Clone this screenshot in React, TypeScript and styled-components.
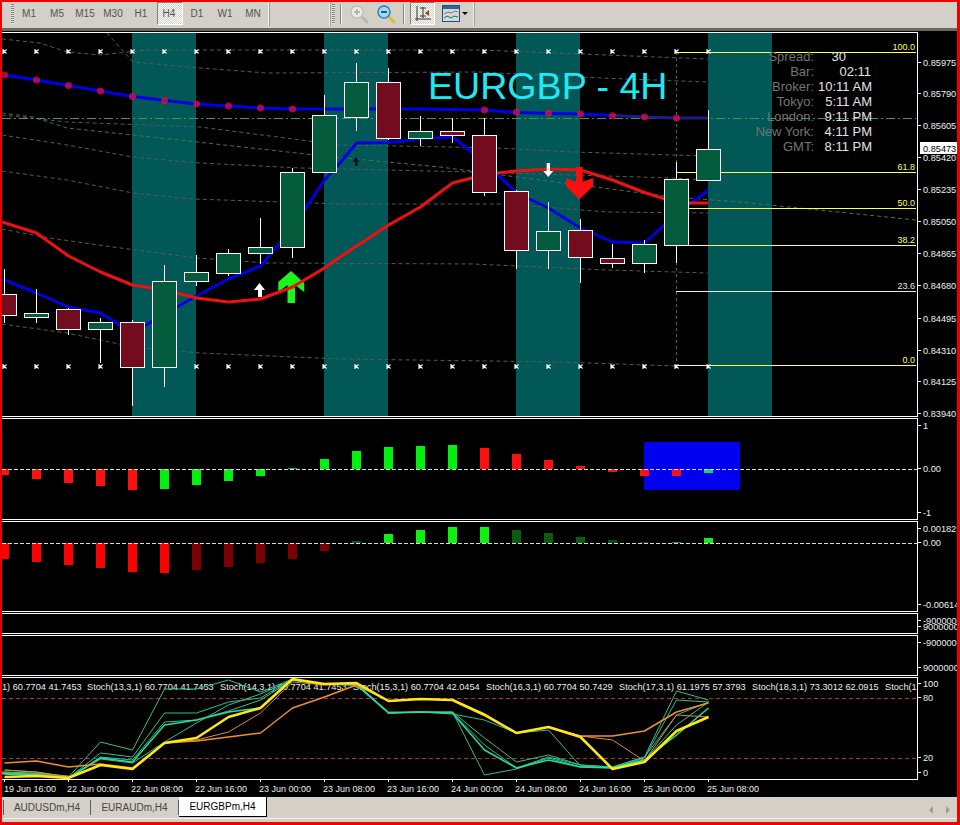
import * as React from "react";
import styled, { createGlobalStyle } from "styled-components";

const cx = (i: number) => 4.5 + 32 * i;
const pts = (p: number[][]) => p.map((q) => q.join(",")).join(" ");
const series = (ys: number[]) => ys.map((y, i) => `${cx(i)},${y}`).join(" ");

const TIMEFRAMES = ["M1", "M5", "M15", "M30", "H1", "H4", "D1", "W1", "MN"];

// [wick top, wick bottom, body top, body bottom, up?]
const CANDLES: [number, number, number, number, boolean][] = [
  [269, 323, 294, 315, false],
  [289, 323, 313, 317, true],
  [308, 335, 309, 329, false],
  [318, 363, 322, 329, true],
  [320, 406, 322, 367, false],
  [265, 387, 281, 367, true],
  [255, 286, 272, 281, true],
  [249, 276, 253, 273, true],
  [218, 264, 247, 253, true],
  [168, 258, 172, 247, true],
  [95, 172, 115, 172, true],
  [63, 131, 82, 117, true],
  [68, 140, 82, 138, false],
  [116, 146, 131, 138, true],
  [118, 143, 131, 135, false],
  [118, 196, 135, 192, false],
  [190, 269, 191, 250, false],
  [202, 269, 231, 250, true],
  [219, 283, 230, 257, false],
  [244, 268, 258, 263, false],
  [240, 273, 244, 263, true],
  [162, 263, 179, 245, true],
  [110, 150, 149, 180, true],
];

const DASHED: { color: string; p: number[][] }[] = [
  { color: "#555b55", p: [[2, 39], [40, 43], [67, 52], [100, 55], [147, 50], [300, 50], [480, 50], [708, 59]] },
  { color: "#555b55", p: [[107, 33], [133, 62], [200, 68], [267, 73], [480, 72], [600, 78], [708, 82]] },
  { color: "#4f6f4f", p: [[2, 113], [33, 117], [67, 128], [133, 135], [197, 142], [333, 157], [440, 167], [540, 180], [673, 197], [740, 202], [916, 220]] },
  { color: "#555b55", p: [[2, 135], [67, 145], [133, 157], [200, 163], [300, 168], [473, 172], [673, 178], [708, 180]] },
  { color: "#555b55", p: [[2, 115], [67, 122], [200, 127], [340, 145], [400, 146], [497, 148], [573, 152], [708, 156]] },
  { color: "#555b55", p: [[2, 171], [67, 180], [133, 193], [193, 199], [340, 204], [507, 204], [607, 212], [708, 213]] },
  { color: "#555b55", p: [[2, 229], [43, 237], [113, 247], [197, 258], [267, 263], [473, 264], [607, 270], [708, 273]] },
  { color: "#555b55", p: [[2, 324], [67, 333], [133, 347], [200, 353], [340, 359], [560, 362], [676, 366]] },
];

const FIBS = [
  { y: 52, label: "100.0", color: "#ffff55" },
  { y: 172, label: "61.8", color: "#ffff55" },
  { y: 208, label: "50.0", color: "#ffff55" },
  { y: 245, label: "38.2", color: "#ffff55" },
  { y: 291, label: "23.6", color: "#e8e8e8" },
  { y: 365, label: "0.0", color: "#ffff55" },
];

const UPPER_DOTS = [75, 80, 85.5, 91, 96.5, 100.5, 104, 106, 108, 109];
const LATE_DOTS = [110, 112, 113, 114, 115.7, 117, 118];

const MACD: [number, string][] = [
  [475, "#ff1010"], [479, "#ff1010"], [483, "#ff1010"], [486, "#ff1010"], [490, "#ff1010"],
  [489, "#00f010"], [485, "#00f010"], [481, "#00f010"], [476, "#00f010"], [468, "#00c020"],
  [459, "#00f010"], [451, "#00f010"], [447, "#00f010"], [446, "#00f010"], [445, "#00f010"],
  [448, "#ff1010"], [454, "#ff1010"], [460, "#ff1010"], [466, "#ff1010"], [472, "#f01020"],
  [476, "#ff1010"], [476, "#ff1010"], [473, "#10e060"],
];

const OSMA: [number, string][] = [
  [559, "#ff0000"], [562, "#ff0000"], [565, "#ff0000"], [568, "#ff0000"], [572, "#ff0000"], [573, "#ff0000"],
  [570, "#7d0000"], [567, "#7d0000"], [563, "#7d0000"], [559, "#7d0000"], [551, "#7d0000"],
  [541, "#0c5a1c"], [534, "#10f010"], [530, "#10f010"], [527, "#10f010"], [527, "#10f010"],
  [530, "#0c5c0c"], [533, "#0c5c0c"], [537, "#0c5c0c"], [540, "#0c4c0c"], [542, "#0c4c0c"],
  [542, "#10a030"], [538, "#10f010"],
];

const STOCH_LABELS = [
  { x: 2, text: "1) 60.7704 41.7453" },
  { x: 87, text: "Stoch(13,3,1) 60.7704 41.7453" },
  { x: 220, text: "Stoch(14,3,1) 60.7704 41.7453" },
  { x: 353, text: "Stoch(15,3,1) 60.7704 42.0454" },
  { x: 486, text: "Stoch(16,3,1) 60.7704 50.7429" },
  { x: 619, text: "Stoch(17,3,1) 61.1975 57.3793" },
  { x: 752, text: "Stoch(18,3,1) 73.3012 62.0915" },
  { x: 885, text: "Stoch(19,3,1) 73.3012 62.0915" },
];

const STOCH_LINES: { color: string; w: number; ys: number[] }[] = [
  { color: "#2fc090", w: 1, ys: [770, 772, 777, 742, 750, 689, 689, 680, 692, 679, 684, 683, 713, 712, 712, 775, 769, 758, 767, 767, 757, 691, 700] },
  { color: "#2fc090", w: 1, ys: [772, 774, 778, 753, 757, 713, 713, 702, 698, 679, 684, 684, 712, 712, 712, 738, 762, 755, 765, 767, 757, 715, 702] },
  { color: "#2fc090", w: 1, ys: [773, 775, 778, 759, 763, 742, 723, 705, 694, 680, 684, 685, 713, 712, 714, 720, 733, 730, 766, 768, 758, 700, 702] },
  { color: "#2fc090", w: 1, ys: [773, 775, 778, 757, 760, 722, 720, 711, 700, 680, 684, 685, 713, 712, 713, 745, 768, 757, 765, 767, 760, 725, 702] },
  { color: "#22e0a0", w: 1.5, ys: [774, 775, 778, 758, 762, 725, 720, 712, 708, 680, 684, 685, 713, 712, 713, 750, 768, 760, 767, 768, 760, 735, 708] },
  { color: "#d98a3a", w: 1, ys: [770, 772, 777, 765, 769, 743, 740, 732, 713, 682, 685, 684, 701, 699, 700, 714, 733, 727, 736, 740, 761, 715, 717] },
  { color: "#f0902a", w: 1.5, ys: [763, 761, 767, 764, 768, 743, 741, 737, 733, 708, 697, 685, 701, 699, 700, 714, 733, 727, 736, 736, 731, 712, 703] },
  { color: "#ffe812", w: 2.5, ys: [777, 776, 778, 765, 769, 743, 738, 717, 708, 679, 684, 683, 701, 699, 700, 715, 733, 727, 737, 769, 762, 731, 717] },
];

const TIME_LABELS = [
  "19 Jun 16:00", "22 Jun 00:00", "22 Jun 08:00", "22 Jun 16:00", "23 Jun 00:00", "23 Jun 08:00",
  "23 Jun 16:00", "24 Jun 00:00", "24 Jun 08:00", "24 Jun 16:00", "25 Jun 00:00", "25 Jun 08:00",
];

const INFO: { label: string; value: string; pad?: number }[] = [
  { label: "Spread:", value: "30", pad: 26 },
  { label: "Bar:", value: "02:11", pad: 1 },
  { label: "Broker:", value: "10:11 AM" },
  { label: "Tokyo:", value: "5:11 AM" },
  { label: "London:", value: "9:11 PM" },
  { label: "New York:", value: "4:11 PM" },
  { label: "GMT:", value: "8:11 PM" },
];

const ScaleAxis: React.FC<{
  top: number;
  height: number;
  labels: { y: number; text: string }[];
  current?: { y: number; text: string };
}> = ({ top, height, labels, current }) => (
  <ScaleSvg width={39} height={height} viewBox={`918 ${top} 39 ${height}`}>
    {labels.map((l) => (
      <g key={`${l.text}-${l.y}`}>
        <line x1={918} x2={921} y1={l.y + 0.5} y2={l.y + 0.5} stroke="#fff" />
        <ScaleText x={923} y={l.y + 4}>
          {l.text}
        </ScaleText>
      </g>
    ))}
    {current && (
      <>
        <rect x={920} y={current.y - 6} width={37} height={12} fill="#fff" />
        <CurrentPrice x={923} y={current.y + 4}>
          {current.text}
        </CurrentPrice>
      </>
    )}
  </ScaleSvg>
);

const Histogram: React.FC<{ zero: number; bars: [number, string][] }> = ({ zero, bars }) => (
  <>
    {bars.map(([end, color], i) => (
      <rect
        key={i}
        x={cx(i) - 4.5}
        y={Math.min(end, zero)}
        width={9}
        height={Math.abs(end - zero)}
        fill={color}
      />
    ))}
    <line x1={2} x2={917} y1={zero + 0.5} y2={zero + 0.5} stroke="#ddd" strokeDasharray="4 2" />
  </>
);

const MainPlot = () => (
  <PlotSvg width={915} height={383} viewBox="2 33 915 383">
    {[132, 324, 516, 708].map((x) => (
      <rect key={x} x={x} y={33} width={64} height={383} fill="#025757" />
    ))}
    {DASHED.map((d, i) => (
      <polyline key={i} points={pts(d.p)} fill="none" stroke={d.color} strokeDasharray="4 3" />
    ))}
    <line x1={2} x2={916} y1={118.5} y2={118.5} stroke="#3f9a4a" strokeDasharray="9 3 2 3" />
    <line x1={676.5} x2={676.5} y1={52} y2={365} stroke="#2f7a2f" strokeDasharray="3 3" />
    {FIBS.map((f) => (
      <g key={f.label}>
        <line x1={676} x2={916} y1={f.y + 0.5} y2={f.y + 0.5} stroke={f.color} />
        <FibText x={915} y={f.y - 2} fill={f.color}>
          {f.label}
        </FibText>
      </g>
    ))}

    <polyline
      fill="none"
      stroke="#0000e6"
      strokeWidth={3}
      points={series([75, 80, 85.5, 91, 96.5, 100.5, 104, 106, 108, 109, 109, 109, 109, 109, 109.5, 110, 112.5, 113.5, 114, 115.5])}
    />
    <polyline fill="none" stroke="#1c1c8c" strokeWidth={3} points="612.5,115.5 644.5,117 676.5,118 708.5,118" />
    {UPPER_DOTS.map((y, i) => (
      <Dot key={i} cx={cx(i)} cy={y} r={3.5} />
    ))}
    {LATE_DOTS.map((y, i) => (
      <Dot key={i} cx={cx(i + 15)} cy={y} r={3.5} />
    ))}

    <polygon
      fill="#1cf51c"
      points="291,271 304.3,283 304.3,292 295,285 295,303 287.5,303 287.5,285 278.3,292 278.3,282"
    />
    <polyline
      fill="none"
      stroke="#0000e6"
      strokeWidth={3}
      strokeLinejoin="round"
      points="2,279 36.5,293 68.5,307 100.5,313 132.5,333 164.5,314 196.5,296 228.5,279 260.5,266 292.5,228 324.5,180 340,163 356.5,143 388.5,142.5 420.5,139 452.5,136.7 484.5,162 516.5,193 548.5,208 580.5,228 612.5,242 644.5,243 676.5,214 708.5,190"
    />
    <polyline
      fill="none"
      stroke="#f01010"
      strokeWidth={3}
      strokeLinejoin="round"
      points="2,222 36.5,233 68.5,256 100.5,272 132.5,285 164.5,290 196.5,298 228.5,302 260.5,299 292.5,287 324.5,268 340,257 388.5,225 420.5,207 452.5,183 472,178 497,173 516.5,171 548.5,169 580.5,170 612.5,180 643,192 665,199 690,203 708,203"
    />

    {CANDLES.map(([hi, lo, top, bottom, up], i) => (
      <g key={i} shapeRendering="crispEdges">
        <line x1={cx(i)} x2={cx(i)} y1={hi} y2={lo} stroke="#fff" />
        <rect
          x={cx(i) - 12}
          y={top + 0.5}
          width={24}
          height={bottom - top}
          fill={up ? "#045c3c" : "#740c20"}
          stroke="#fff"
        />
      </g>
    ))}

    {CANDLES.map((_, i) => (
      <g key={i}>
        <Star d={`M${cx(i) - 2} 49.5l4 4M${cx(i) + 2} 49.5l-4 4M${cx(i) - 1.5} 49v5`} />
        {i !== 4 && i !== 5 && (
          <Star d={`M${cx(i) - 2} 364.5l4 4M${cx(i) + 2} 364.5l-4 4M${cx(i) - 1.5} 364v5`} />
        )}
      </g>
    ))}

    <polygon fill="#fff" points="259.5,283 265,290 262,290 262,297 258,297 258,290 254,290" />
    <polygon fill="#111" points="356,157 360,162 357.5,161 357.5,166 355,166 355,161 352,162" />
    <polygon fill="#fff" points="546.7,163 550,163 550,171 553.3,171 548.3,177 543.3,171 546.7,171" />
    <polygon
      fill="#f81010"
      points="576,167 582.7,167 582.7,181.7 593.3,178 593.3,186 579.3,199.5 566,186 566,178 576,181.7"
    />
  </PlotSvg>
);

const StochPlot = () => (
  <PlotSvg width={915} height={101} viewBox="2 678 915 101">
    {STOCH_LABELS.map((l) => (
      <StochText key={l.x} x={l.x} y={690}>
        {l.text}
      </StochText>
    ))}
    {[698.5, 758.5].map((y) => (
      <line key={y} x1={2} x2={917} y1={y} y2={y} stroke="#b03040" strokeDasharray="4 3" />
    ))}
    <polyline fill="none" stroke="#8aa83c" strokeWidth={3} points="2,773 36.5,774 68.5,777" />
    {STOCH_LINES.map((l, i) => (
      <polyline key={i} fill="none" stroke={l.color} strokeWidth={l.w} strokeLinejoin="round" points={series(l.ys)} />
    ))}
  </PlotSvg>
);

const ZoomIcon: React.FC<{ active?: boolean; minus?: boolean }> = ({ active, minus }) => (
  <svg width={20} height={20} viewBox="0 0 20 20">
    <line
      x1={12}
      y1={12}
      x2={18}
      y2={18}
      stroke={active ? "#e0c030" : "#b8b8b0"}
      strokeWidth={3}
      strokeLinecap="round"
    />
    <circle cx={8} cy={8} r={6} fill={active ? "#a8d8f0" : "#ecebe6"} stroke={active ? "#2c80c0" : "#c0c0bc"} strokeWidth={1.5} />
    <path d={minus ? "M5 8h6" : "M5 8h6M8 5v6"} stroke={active ? "#205c90" : "#b4b4b0"} strokeWidth={2} />
  </svg>
);

const CrosshairIcon = () => (
  <svg width={18} height={18} viewBox="0 0 18 18">
    <path d="M3 1v15M1 14h16M9 2v11M6 3h6M6 11h6" stroke="#303830" fill="none" />
    <path d="M11 8l4-3v6z" fill="#a04020" />
  </svg>
);

const TemplateIcon = () => (
  <svg width={18} height={17} viewBox="0 0 18 17">
    <rect x={0.5} y={0.5} width={17} height={16} fill="#c8dcec" stroke="#2c4c78" />
    <rect x={1} y={1} width={16} height={3} fill="#34609c" />
    <path d="M2 9l4-2 3 1 4-2 3 1" stroke="#c06020" fill="none" />
    <path d="M2 13l3-2 4 2 3-2 4 1" stroke="#306830" fill="none" />
  </svg>
);

export default function App() {
  return (
    <>
      <GlobalStyle />
      <Frame>
        <Toolbar>
          <Grip />
          <Timeframes>
            {TIMEFRAMES.map((t) => (
              <TimeframeButton key={t} $pressed={t === "H4"}>
                {t}
              </TimeframeButton>
            ))}
          </Timeframes>
          <BarEdge />
          <BarGap />
          <BarEdge />
          <Grip $near />
          <Divider $gap={5} />
          <IconButton $left={5}>
            <ZoomIcon />
          </IconButton>
          <IconButton $left={4}>
            <ZoomIcon active minus />
          </IconButton>
          <Divider $gap={6} />
          <PressedIcon>
            <CrosshairIcon />
          </PressedIcon>
          <TemplateSlot>
            <TemplateIcon />
          </TemplateSlot>
          <DropArrow />
          <BarEdge $left={5} />
        </Toolbar>

        <Chart>
          <PanelRow>
            <Plot $height={385}>
              <MainPlot />
              <Title>EURGBP - 4H</Title>
              <InfoTable>
                {INFO.map((r) => (
                  <React.Fragment key={r.label}>
                    <InfoLabel>{r.label}</InfoLabel>
                    <InfoValue $pad={r.pad ?? 0}>{r.value}</InfoValue>
                  </React.Fragment>
                ))}
              </InfoTable>
            </Plot>
            <ScaleAxis
              top={32}
              height={385}
              current={{ y: 148, text: "0.85473" }}
              labels={[
                { y: 62, text: "0.85975" },
                { y: 93, text: "0.85790" },
                { y: 125, text: "0.85605" },
                { y: 157, text: "0.85420" },
                { y: 189, text: "0.85235" },
                { y: 221, text: "0.85050" },
                { y: 253, text: "0.84865" },
                { y: 285, text: "0.84680" },
                { y: 318, text: "0.84495" },
                { y: 350, text: "0.84310" },
                { y: 381, text: "0.84125" },
                { y: 413, text: "0.83940" },
              ]}
            />
          </PanelRow>

          <PanelRow>
            <Plot $height={102}>
              <PlotSvg width={915} height={100} viewBox="2 419 915 100">
                <rect x={644} y={442} width={96} height={48} fill="#0000f0" />
                <Histogram zero={469} bars={MACD} />
              </PlotSvg>
            </Plot>
            <ScaleAxis
              top={418}
              height={102}
              labels={[
                { y: 425, text: "1" },
                { y: 468, text: "0.00" },
                { y: 512, text: "-1" },
              ]}
            />
          </PanelRow>

          <PanelRow>
            <Plot $height={91}>
              <PlotSvg width={915} height={89} viewBox="2 522 915 89">
                <Histogram zero={543} bars={OSMA} />
              </PlotSvg>
            </Plot>
            <ScaleAxis
              top={521}
              height={91}
              labels={[
                { y: 528, text: "0.001825" },
                { y: 542, text: "0.00" },
                { y: 604, text: "-0.00614" },
              ]}
            />
          </PanelRow>

          <PanelRow>
            <Plot $height={21} />
            <ScaleAxis
              top={613}
              height={21}
              labels={[
                { y: 620, text: "-9000000" },
                { y: 626, text: "9000000" },
              ]}
            />
          </PanelRow>

          <PanelRow>
            <Plot $height={41} />
            <ScaleAxis
              top={635}
              height={41}
              labels={[
                { y: 642, text: "-9000000" },
                { y: 667, text: "9000000" },
              ]}
            />
          </PanelRow>

          <PanelRow>
            <Plot $height={103}>
              <StochPlot />
            </Plot>
            <ScaleAxis
              top={677}
              height={103}
              labels={[
                { y: 683, text: "100" },
                { y: 697, text: "80" },
                { y: 757, text: "20" },
                { y: 772, text: "0" },
              ]}
            />
          </PanelRow>
        </Chart>

        <TimeAxis width={955} height={17} viewBox="2 780 955 17">
          {TIME_LABELS.map((t, i) => (
            <g key={t}>
              <line x1={cx(i * 2)} x2={cx(i * 2)} y1={780} y2={782} stroke="#fff" />
              <TimeText x={i === 0 ? 4 : cx(i * 2) - 1.5} y={792}>
                {t}
              </TimeText>
            </g>
          ))}
        </TimeAxis>

        <TabBar>
          <TabItem $first>AUDUSDm,H4</TabItem>
          <TabItem>EURAUDm,H4</TabItem>
          <ActiveTab>EURGBPm,H4</ActiveTab>
          <Arrows>
            <ScrollArrow $dir="left" />
            <ScrollArrow $dir="right" />
          </Arrows>
        </TabBar>
      </Frame>
    </>
  );
}

const GlobalStyle = createGlobalStyle`
  html, body {
    margin: 0;
    background: #000;
    font-family: "Liberation Sans", Arial, sans-serif;
  }
`;

const Frame = styled.div`
  box-sizing: border-box;
  width: 960px;
  height: 825px;
  display: flex;
  flex-direction: column;
  border: solid #f00000;
  border-width: 2px 3px 3px 2px;
  background: #000;
  overflow: hidden;
`;

const Toolbar = styled.div`
  box-sizing: border-box;
  height: 29px;
  flex: none;
  display: flex;
  align-items: center;
  padding-bottom: 3px;
  background: #d4d0c8;
  border-bottom: 3px solid #6a6862;
`;

const Grip = styled.div<{ $near?: boolean }>`
  width: 3px;
  height: 20px;
  margin-left: ${(p) => (p.$near ? "1px" : "9px")};
  background: repeating-linear-gradient(to bottom, #807c74 0 1px, #eeeae2 1px 2px);
`;

const Timeframes = styled.div`
  display: flex;
  margin-left: 1px;
`;

const TimeframeButton = styled.div<{ $pressed?: boolean }>`
  box-sizing: border-box;
  width: 28px;
  height: 23px;
  display: flex;
  align-items: center;
  justify-content: center;
  font-size: 10px;
  color: #55534e;
  ${(p) =>
    p.$pressed &&
    `
    margin-left: 2px;
    width: 26px;
    padding-right: 2px;
    background: repeating-conic-gradient(#fff 0 25%, #d4d0c8 0 50%) 0 0 / 2px 2px;
    border: 1px solid;
    border-color: #85827a #fff #fff #85827a;
  `}
`;

const BarEdge = styled.div<{ $left?: number }>`
  width: 1px;
  height: 24px;
  margin-left: ${(p) => p.$left ?? 1}px;
  background: #f4f2ec;
  border-right: 1px solid #a09c94;
`;

const BarGap = styled.div`
  width: 58px;
`;

const Divider = styled.div<{ $gap: number }>`
  width: 1px;
  height: 20px;
  margin-left: ${(p) => p.$gap}px;
  background: #8a867e;
  border-right: 1px solid #f4f2ec;
`;

const IconButton = styled.div<{ $left: number }>`
  width: 23px;
  height: 22px;
  margin-left: ${(p) => p.$left}px;
  display: flex;
  align-items: center;
  justify-content: center;
`;

const PressedIcon = styled.div`
  box-sizing: border-box;
  width: 25px;
  height: 23px;
  margin-left: 5px;
  display: flex;
  align-items: center;
  justify-content: center;
  background: repeating-conic-gradient(#fff 0 25%, #d4d0c8 0 50%) 0 0 / 2px 2px;
  border: 1px solid;
  border-color: #85827a #fff #fff #85827a;
`;

const TemplateSlot = styled.div`
  margin-left: 7px;
  display: flex;
`;

const DropArrow = styled.div`
  width: 0;
  height: 0;
  margin-left: 2px;
  border: 3px solid transparent;
  border-top: 3px solid #000;
  border-bottom: 0;
`;

const Chart = styled.div`
  flex: none;
  display: flex;
  flex-direction: column;
  gap: 1px;
  padding-top: 1px;
`;

const PanelRow = styled.div`
  display: flex;
`;

const Plot = styled.div<{ $height: number }>`
  box-sizing: border-box;
  position: relative;
  width: 916px;
  height: ${(p) => p.$height}px;
  flex: none;
  border: solid #fff;
  border-width: 1px 1px 1px 0;
`;

const PlotSvg = styled.svg`
  display: block;
`;

const ScaleSvg = styled.svg`
  display: block;
  flex: none;
`;

const ScaleText = styled.text`
  font-family: "Liberation Sans", Arial, sans-serif;
  font-size: 9.2px;
  fill: #f0f0f0;
`;

const CurrentPrice = styled.text`
  font-family: "Liberation Sans", Arial, sans-serif;
  font-size: 9.2px;
  fill: #000;
`;

const FibText = styled.text`
  font-family: "Liberation Sans", Arial, sans-serif;
  font-size: 9px;
  text-anchor: end;
`;

const StochText = styled.text`
  font-family: "Liberation Sans", Arial, sans-serif;
  font-size: 9.2px;
  fill: #eee;
`;

const TimeText = styled.text`
  font-family: "Liberation Sans", Arial, sans-serif;
  font-size: 9px;
  fill: #eee;
`;

const TimeAxis = styled.svg`
  display: block;
  flex: none;
`;

const Dot = styled.circle`
  fill: #f0103a;
  opacity: 0.7;
`;

const Star = styled.path`
  fill: none;
  stroke: #fff;
  stroke-width: 1.1;
`;

const Title = styled.div`
  position: absolute;
  left: 426px;
  top: 35px;
  font-size: 37.6px;
  line-height: 37px;
  color: #20e8f4;
  white-space: nowrap;
`;

const InfoTable = styled.div`
  position: absolute;
  left: 742px;
  top: 16px;
  display: grid;
  grid-template-columns: 70px 58px;
  grid-auto-rows: 15px;
  font-size: 13px;
  line-height: 15px;
`;

const InfoLabel = styled.div`
  text-align: right;
  color: #747474;
`;

const InfoValue = styled.div<{ $pad: number }>`
  text-align: right;
  color: #e4e4e4;
  padding-right: ${(p) => p.$pad}px;
  white-space: nowrap;
`;

const TabBar = styled.div`
  box-sizing: border-box;
  height: 25px;
  flex: none;
  display: flex;
  align-items: flex-start;
  padding-left: 1px;
  background: #d4d0c8;
  box-shadow: inset 0 -3px 0 #d4d0c8, inset 0 -4px 0 #f4f2ec;
`;

const TabItem = styled.div<{ $first?: boolean }>`
  box-sizing: border-box;
  width: 88px;
  height: 15px;
  margin-top: 3px;
  font-size: 10px;
  line-height: 15px;
  text-align: center;
  color: #444;
  border-right: 1px solid #605e5a;
  ${(p) => p.$first && "border-left: 1px solid #605e5a;"}
`;

const ActiveTab = styled.div`
  box-sizing: border-box;
  width: 88px;
  height: 20px;
  font-size: 10px;
  line-height: 20px;
  text-align: center;
  color: #000;
  background: #fff;
  border: solid #000;
  border-width: 0 1px 1px 0;
`;

const Arrows = styled.div`
  margin-left: auto;
  margin-right: 7px;
  margin-top: 9px;
  display: flex;
  gap: 13px;
`;

const ScrollArrow = styled.div<{ $dir: "left" | "right" }>`
  width: 0;
  height: 0;
  border: 4px solid transparent;
  ${(p) =>
    p.$dir === "left"
      ? "border-right: 4px solid #a09c94; border-left: 0;"
      : "border-left: 4px solid #a09c94; border-right: 0;"}
`;
